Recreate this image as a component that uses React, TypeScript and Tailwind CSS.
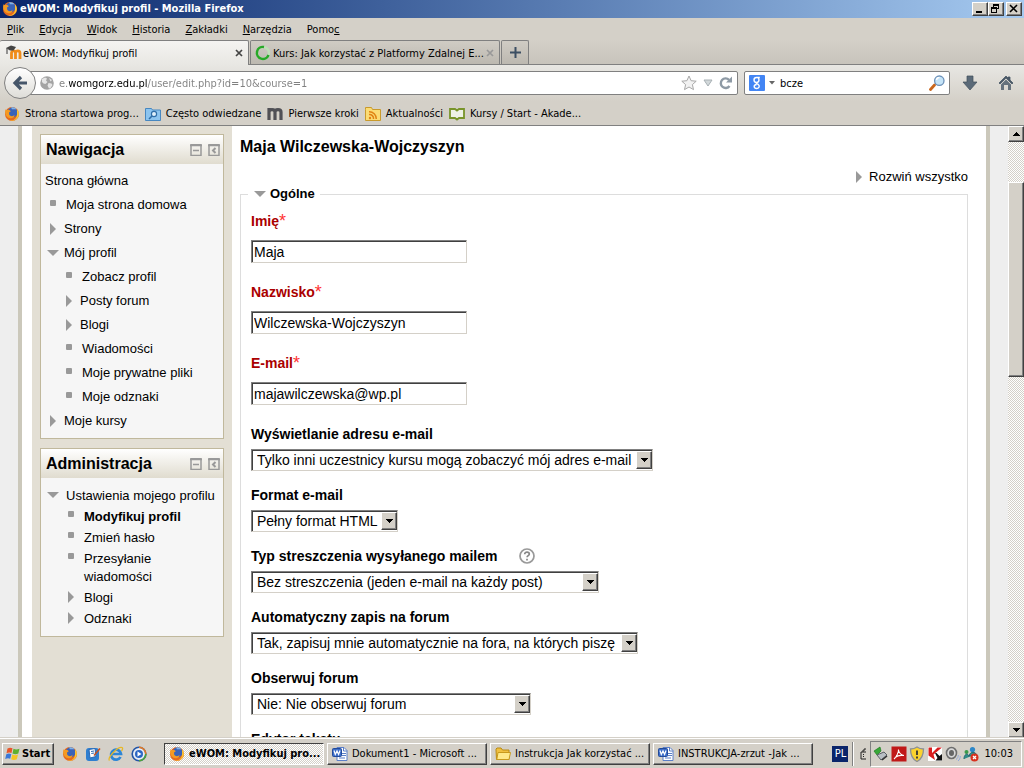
import { useState } from "react";
import type { ReactNode } from "react";

type Node = { label: string; level: 0 | 1 | 2; kind: "root" | "leaf" | "open" | "closed"; current?: boolean };

const navigation: Node[] = [
  { label: "Strona główna", level: 0, kind: "root" },
  { label: "Moja strona domowa", level: 1, kind: "leaf" },
  { label: "Strony", level: 1, kind: "closed" },
  { label: "Mój profil", level: 1, kind: "open" },
  { label: "Zobacz profil", level: 2, kind: "leaf" },
  { label: "Posty forum", level: 2, kind: "closed" },
  { label: "Blogi", level: 2, kind: "closed" },
  { label: "Wiadomości", level: 2, kind: "leaf" },
  { label: "Moje prywatne pliki", level: 2, kind: "leaf" },
  { label: "Moje odznaki", level: 2, kind: "leaf" },
  { label: "Moje kursy", level: 1, kind: "closed" },
];

const administration: Node[] = [
  { label: "Ustawienia mojego profilu", level: 1, kind: "open" },
  { label: "Modyfikuj profil", level: 2, kind: "leaf", current: true },
  { label: "Zmień hasło", level: 2, kind: "leaf" },
  { label: "Przesyłanie wiadomości", level: 2, kind: "leaf" },
  { label: "Blogi", level: 2, kind: "closed" },
  { label: "Odznaki", level: 2, kind: "closed" },
];

const textFields = [
  { id: "firstname", label: "Imię", value: "Maja" },
  { id: "lastname", label: "Nazwisko", value: "Wilczewska-Wojczyszyn" },
  { id: "email", label: "E-mail", value: "majawilczewska@wp.pl" },
];

const selectFields = [
  { id: "maildisplay", label: "Wyświetlanie adresu e-mail", value: "Tylko inni uczestnicy kursu mogą zobaczyć mój adres e-mail", width: "w-[402px]" },
  { id: "mailformat", label: "Format e-mail", value: "Pełny format HTML", width: "w-[147px]" },
  { id: "maildigest", label: "Typ streszczenia wysyłanego mailem", value: "Bez streszczenia (jeden e-mail na każdy post)", width: "w-[348px]", help: true },
  { id: "autosubscribe", label: "Automatyczny zapis na forum", value: "Tak, zapisuj mnie automatycznie na fora, na których piszę", width: "w-[387px]" },
  { id: "trackforums", label: "Obserwuj forum", value: "Nie: Nie obserwuj forum", width: "w-[280px]" },
  { id: "editor", label: "Edytor tekstu", value: "Domyślny edytor", width: "w-[280px]" },
];

const menus = [
  ["", "P", "lik"],
  ["", "E", "dycja"],
  ["", "W", "idok"],
  ["", "H", "istoria"],
  ["", "Z", "akładki"],
  ["", "N", "arzędzia"],
  ["Pomo", "c", ""],
];

const raised =
  "border border-t-white border-l-white border-r-[#404040] border-b-[#404040] bg-[#d4d0c8] shadow-[inset_-1px_-1px_0_#808080]";
const sunken = "border border-t-[#808080] border-l-[#808080] border-r-[#d4d0c8] border-b-[#d4d0c8] shadow-[inset_1px_1px_0_#404040]";
const dither = "bg-[conic-gradient(#fff_25%,#d4d0c8_0_50%,#fff_0_75%,#d4d0c8_0)] bg-[length:2px_2px]";

function FirefoxIcon({ className = "size-4" }) {
  return (
    <svg viewBox="0 0 16 16" className={`${className} shrink-0`}>
      <circle cx="8" cy="8" r="7" fill="#e66a1c" />
      <circle cx="8.5" cy="6.5" r="5" fill="#3a63b8" />
      <path d="M7 1.6c2-.8 4.500 0 5.600 1.800-1.800-.4-3 .2-4.600-.2z" fill="#7fb2e8" />
      <path d="M1.500 3.200c.5.600 1 .9 1.800.9 1.400-.4 2.900 0 3.500 1.200L5 6.400c.3 1.600-.2 2.300 1.300 3.300 1.500.9 3.200.4 4.300-.6-.2 2.200-1.900 3.300-4 3.200C3.300 12 1.500 9.500 1.200 7c-.2-1.500 0-2.800.3-3.800z" fill="#f49a22" />
      <path d="M13 3.300c1.900 2 2.500 5 1.200 7.500-1.600 3.200-5 4.700-8.200 3.900 4 .2 6.600-2.400 7-5.600.3-2-.1-3.900 0-5.800z" fill="#fdc733" />
    </svg>
  );
}

function MoodleIcon() {
  return (
    <svg viewBox="0 0 16 16" className="size-4 shrink-0">
      <path d="M5.500 14V8c0-2.800 4-2.800 4 0v6m0-6c0-2.800 4.500-2.800 4.500 0v6" fill="none" stroke="#f08c1a" strokeWidth="2.800" />
      <path d="M0 3l5-2.500 5 1.500-2.500 3.500H4z" fill="#444" />
      <path d="M1 3v6" stroke="#555" strokeWidth="1.200" />
    </svg>
  );
}

function WordIcon() {
  return (
    <svg viewBox="0 0 16 16" className="size-4 shrink-0">
      <path d="M5 1.500h7l3 3v10H5z" fill="#fff" stroke="#5b7fc7" />
      <path d="M11.500 1.500V5H15M10 7.500h4M10 9.500h4M7 12h6" fill="none" stroke="#5b7fc7" />
      <rect x="0.500" y="2.500" width="9" height="8" rx="1" fill="#3b6dc9" stroke="#234a99" />
      <path d="M2 4.500l1.300 4L5 5l1.600 3.500 1.400-4" fill="none" stroke="#fff" strokeWidth="1.200" />
    </svg>
  );
}

function FolderIcon() {
  return (
    <svg viewBox="0 0 16 16" className="size-4 shrink-0">
      <path d="M1 4V3l1-1h4l1.500 2H14v9.500H1.500z" fill="#f0c040" stroke="#b98a12" />
      <path d="M3 6.500h12.500L14 13.500H1.800z" fill="#ffe98a" stroke="#c99a1c" />
    </svg>
  );
}

function ArrowDown() {
  return (
    <svg viewBox="0 0 7 4" className="h-1 w-[7px]" shapeRendering="crispEdges">
      <path d="M0 0h7v1H6v1H5v1H4v1H3V3H2V2H1V1H0z" fill="#000" />
    </svg>
  );
}

function ArrowUp() {
  return (
    <svg viewBox="0 0 7 4" className="h-1 w-[7px]" shapeRendering="crispEdges">
      <path d="M3 0h1v1h1v1h1v1h1v1H0V3h1V2h1V1h1z" fill="#000" />
    </svg>
  );
}

function Twisty({ open }: { open: boolean }) {
  return (
    <svg viewBox="0 0 12 12" className="size-3 shrink-0">
      <path d={open ? "M0 3h12L6 9z" : "M3 0l6 6-6 6z"} fill="#999" />
    </svg>
  );
}

function TitleBar() {
  return (
    <header className="flex h-[18px] shrink-0 items-center bg-linear-to-r from-[#0a246a] to-[#a6caf0] px-[2px]">
      <FirefoxIcon />
      <h1 className="ml-[2px] grow text-[11px] font-bold text-white">eWOM: Modyfikuj profil - Mozilla Firefox</h1>
      <div className="flex">
        <button aria-label="Minimalizuj" className={`h-[14px] w-4 ${raised}`}>
          <svg viewBox="0 0 14 12" shapeRendering="crispEdges"><path d="M3 8h6v2H3z" /></svg>
        </button>
        <button aria-label="Przywróć" className={`h-[14px] w-4 ${raised}`}>
          <svg viewBox="0 0 14 12" shapeRendering="crispEdges">
            <path d="M4 1h6v5H8V5h1V3H5v1H4zM2 4h6v6H2zm1 2v3h4V6z" fillRule="evenodd" />
          </svg>
        </button>
        <button aria-label="Zamknij" className={`ml-[2px] h-[14px] w-4 ${raised}`}>
          <svg viewBox="0 0 14 12"><path d="M3 2l7 7M10 2L3 9" stroke="#000" strokeWidth="1.600" /></svg>
        </button>
      </div>
    </header>
  );
}

function TabStrip() {
  return (
    <div className="flex h-[25px] shrink-0 gap-px border-b border-[#808080] bg-linear-to-b from-[#d4d0c8] to-[#c8c4bc]" role="tablist">
      <div className="-mb-px flex w-[249px] items-center rounded-t-xs border-t border-r border-[#808080] bg-linear-to-b from-[#f4f3f1] to-[#e8e7e3] pr-[5px] pl-[6px]">
        <MoodleIcon />
        <button role="tab" aria-selected="true" className="ml-px grow pt-[2px] text-left">eWOM: Modyfikuj profil</button>
        <CloseTab label="Zamknij kartę eWOM" color="#444" />
      </div>
      <div className="flex w-[250px] items-center rounded-t-xs border border-b-0 border-[#808080] bg-linear-to-b from-[#d0ccc4] to-[#bcb8b0] pr-[5px] pl-1">
        <svg viewBox="0 0 16 16" className="size-4 shrink-0">
          <circle cx="8" cy="8" r="6" fill="none" stroke="#bfe0b8" strokeWidth="2.500" />
          <path d="M9 2a6 6 0 1 0 4.500 8" fill="none" stroke="#28a828" strokeWidth="2.500" />
        </svg>
        <button role="tab" aria-selected="false" className="ml-[2px] min-w-0 grow truncate pt-[2px] text-left">Kurs: Jak korzystać z Platformy Zdalnej E...</button>
        <CloseTab label="Zamknij kartę Kurs" color="#999" />
      </div>
      <button aria-label="Nowa karta" className="flex w-7 items-center justify-center rounded-t-xs border border-b-0 border-[#808080] bg-linear-to-b from-[#d0ccc4] to-[#bcb8b0]">
        <svg viewBox="0 0 11 11" className="size-[11px]"><path d="M5.500 0v11M0 5.500h11" stroke="#3c4f63" strokeWidth="2" /></svg>
      </button>
    </div>
  );
}

function CloseTab({ label, color }: { label: string; color: string }) {
  return (
    <button aria-label={label} className="shrink-0">
      <svg viewBox="0 0 8 8" className="size-2"><path d="M1 1l6 6M7 1L1 7" stroke={color} strokeWidth="1.700" /></svg>
    </button>
  );
}

function NavBar() {
  const [url, setUrl] = useState("e.womgorz.edu.pl/user/edit.php?id=10&course=1");
  const [query, setQuery] = useState("bcze");
  return (
    <div className="flex h-[36px] shrink-0 items-center bg-linear-to-b from-[#e8e7e3] to-[#d4d0c8] pl-1">
      <button aria-label="Wstecz" className="z-10 flex size-8 shrink-0 items-center justify-center rounded-full border border-[#808080] bg-linear-to-b from-white to-[#deddd8]">
        <svg viewBox="0 0 16 16" className="size-4"><path d="M9 2L3 8l6 6M3 8h12" fill="none" stroke="#46566a" strokeWidth="3.200" /></svg>
      </button>
      <div className="-ml-2 flex h-6 min-w-0 grow items-center rounded-xs border border-[#808080] bg-white pr-1 pl-[10px]">
        <svg viewBox="0 0 16 16" className="size-4 shrink-0">
          <circle cx="8" cy="8" r="6.800" fill="#a4a4a4" />
          <path d="M3 4l3-1.500 2 1-1 2 1.500 1.500-2 2-2-.5L3 7zM9.500 8l3 .5 1 1.500-2 3-1.500.5-1.500-3zM10 3l3 2-1.500 1.500z" fill="#e6e6e6" />
        </svg>
        <input
          aria-label="Adres strony"
          value={url}
          onChange={(e) => setUrl(e.target.value)}
          className="ml-1 min-w-0 grow bg-linear-[to_right,#808080_10px,#000_10px,#000_88px,#808080_88px] bg-clip-text pt-[2px] text-transparent caret-black outline-none"
        />
        <button aria-label="Dodaj zakładkę">
          <svg viewBox="0 0 16 16" className="size-4"><path d="M8 1l2.100 4.700 5.100.5-3.800 3.400 1.100 5L8 12l-4.500 2.600 1.100-5L.8 6.200l5.100-.5z" fill="#f2f2f2" stroke="#a8a8a8" /></svg>
        </button>
        <button aria-label="Historia adresów" className="ml-[6px]">
          <svg viewBox="0 0 10 8" className="h-2 w-[10px]"><path d="M1 1h8L5 7z" fill="#d2d8da" stroke="#a8b0b4" /></svg>
        </button>
        <button aria-label="Odśwież" className="ml-[6px]">
          <svg viewBox="0 0 14 14" className="size-[14px]">
            <path d="M10.500 10A4.800 4.800 0 1 1 10 3.800" fill="none" stroke="#8e9aa5" strokeWidth="2.400" />
            <path d="M13 .5v6H7z" fill="#8e9aa5" />
          </svg>
        </button>
      </div>
      <div className="ml-[6px] flex h-6 w-[206px] shrink-0 items-center rounded-xs border border-[#808080] bg-white px-1">
        <svg viewBox="0 0 16 16" className="size-4 shrink-0">
          <rect width="16" height="16" rx="1" fill="#4285f4" />
          <path d="M10.800 2.500H7.600C5.800 2.500 5 3.600 5 5s1 2.400 2.500 2.400S10 6.400 10 5 9.300 2.700 8.600 2.500M7.500 7.400c-1 1 .6 1.300 1.600 2 1.900 1.300 1.400 4.100-1.300 4.100-3.200 0-3.700-3.500-.2-4" fill="none" stroke="#fff" strokeWidth="1.400" />
        </svg>
        <button aria-label="Wybierz wyszukiwarkę" className="mr-[5px] ml-1">
          <svg viewBox="0 0 6 4" className="h-1 w-[6px]"><path d="M0 0h6L3 3.500z" fill="#666" /></svg>
        </button>
        <input aria-label="Szukaj" value={query} onChange={(e) => setQuery(e.target.value)} className="min-w-0 grow pt-[2px] text-black outline-none" />
        <button aria-label="Wyszukaj">
          <svg viewBox="0 0 16 16" className="size-4">
            <path d="M1.500 14.500l4-4.500" stroke="#c9661c" strokeWidth="2.800" strokeLinecap="round" />
            <circle cx="10.300" cy="5.700" r="4.700" fill="#c5e4f8" stroke="#6b90b8" strokeWidth="1.300" />
            <path d="M7.500 5a3 3 0 0 1 3-2.500" stroke="#fff" strokeWidth="1.500" fill="none" />
          </svg>
        </button>
      </div>
      <button aria-label="Pobrane pliki" className="mx-3">
        <svg viewBox="0 0 16 16" className="size-4"><path d="M5 1h6v6h4l-7 8-7-8h4z" fill="#5b6a78" stroke="#3f4d5a" strokeWidth="0.700" /></svg>
      </button>
      <button aria-label="Strona domowa" className="mr-[10px] ml-2">
        <svg viewBox="0 0 16 16" className="size-4">
          <path d="M8 1L1 8l1 1 6-6 6 6 1-1-3-3V2h-2v1z" fill="#4a5967" stroke="#4a5967" strokeWidth="0.800" />
          <path d="M3 9.500l5-5 5 5V15h-3v-5H6v5H3z" fill="#66727d" />
        </svg>
      </button>
    </div>
  );
}

function Bookmarks() {
  const items: { label: string; icon: ReactNode }[] = [
    { label: "Strona startowa prog...", icon: <FirefoxIcon /> },
    {
      label: "Często odwiedzane",
      icon: (
        <svg viewBox="0 0 16 16" className="size-4 shrink-0">
          <path d="M.5 2.500h6l1 1.500h8v10.500H.5z" fill="#8cc4ef" stroke="#4787c0" />
          <circle cx="9" cy="8" r="2.600" fill="#dff0fb" stroke="#2f6ea8" strokeWidth="1.200" />
          <path d="M7 10l-3 3" stroke="#2f6ea8" strokeWidth="1.600" />
        </svg>
      ),
    },
    {
      label: "Pierwsze kroki",
      icon: (
        <svg viewBox="0 0 16 16" className="size-4 shrink-0">
          <path d="M2 14V2m0 4c0-3.200 6-3.200 6 0v8m0-8c0-3.200 6-3.200 6 0v8" fill="none" stroke="#505055" strokeWidth="3.200" />
        </svg>
      ),
    },
    {
      label: "Aktualności",
      icon: (
        <svg viewBox="0 0 16 16" className="size-4 shrink-0">
          <path d="M.5 3.500v-2h6l1 2h8v11H.5z" fill="#fbdc74" stroke="#c99a2c" />
          <circle cx="5" cy="12" r="1.200" fill="#e08414" />
          <path d="M4 8.500a4 4 0 0 1 4.500 4.500M4 5.800a7 7 0 0 1 7.300 7.200" fill="none" stroke="#e08414" strokeWidth="1.500" />
        </svg>
      ),
    },
    {
      label: "Kursy / Start - Akade...",
      icon: (
        <svg viewBox="0 0 16 16" className="size-4 shrink-0">
          <path d="M1 3h5l2 1.500L10 3h5v9h-5l-2 1.500L6 12H1z" fill="#eef2e6" stroke="#78942a" strokeWidth="1.800" />
        </svg>
      ),
    },
  ];
  return (
    <nav aria-label="Zakładki" className="flex h-[25px] shrink-0 items-center gap-[6px] border-b border-[#808080] pt-px pl-1">
      {items.map((item) => (
        <a key={item.label} href="#" className="flex items-center gap-[5px] whitespace-nowrap">
          {item.icon}
          {item.label}
        </a>
      ))}
    </nav>
  );
}

function Block({ title, children }: { title: string; children: ReactNode }) {
  return (
    <section className="border border-[#c0b89c] bg-[#f6f6f6]">
      <div className="flex h-[29px] items-center bg-linear-to-b from-white to-[#e0dccf] pt-px pr-[3px] pl-[5px]">
        <h2 className="grow text-[16px] font-bold">{title}</h2>
        <button aria-label={`Ukryj blok ${title}`} className="mr-[6px]">
          <svg viewBox="0 0 12 12" className="size-3"><path d="M1 .5v11h10V.500zM0 1.500h12M3 6.500h6" fill="none" stroke="#999" strokeWidth="1.500" /></svg>
        </button>
        <button aria-label={`Zadokuj blok ${title}`}>
          <svg viewBox="0 0 12 12" className="size-3">
            <path d="M1 .5v11h10V.500zM0 1.500h12" fill="none" stroke="#999" strokeWidth="1.500" />
            <path d="M7.500 4L5 6.500 7.500 9" fill="none" stroke="#999" strokeWidth="2" />
          </svg>
        </button>
      </div>
      {children}
    </section>
  );
}

function TreeIcon({ kind }: { kind: Node["kind"] }) {
  if (kind === "leaf") return <span className="mb-1 flex w-3 shrink-0 justify-center"><i className="size-[6px] rounded-[1px] bg-[#999]" /></span>;
  return <Twisty open={kind === "open"} />;
}

function Navigation() {
  return (
    <ul className="pt-[5px] pb-[5px]">
      {navigation.map((n) => (
        <li key={n.label} className={`flex h-6 items-center ${n.level === 0 ? "pl-1" : n.level === 1 ? "pl-[6px]" : "pl-[22px]"} ${n.kind === "leaf" ? "gap-[7px]" : "gap-[5px]"}`}>
          {n.kind !== "root" && <TreeIcon kind={n.kind} />}
          <a href="#">{n.label}</a>
        </li>
      ))}
    </ul>
  );
}

function Administration() {
  return (
    <ul className="pt-[9px] pb-[5px] leading-[18px]">
      {administration.map((n) => (
        <li key={n.label} className={`flex gap-[7px] pb-[3px] ${n.level === 1 ? "pl-[6px]" : "pr-12 pl-6"}`}>
          <span className="flex h-4 items-center"><TreeIcon kind={n.kind} /></span>
          <a href="#" className={n.current ? "font-bold whitespace-nowrap" : n.level === 1 ? "whitespace-nowrap" : ""}>{n.label}</a>
        </li>
      ))}
    </ul>
  );
}

function ProfileForm() {
  return (
    <main className="flex min-w-0 grow flex-col bg-white pr-[18px] pl-2 text-[13px]">
      <h2 className="mt-[11px] text-[16px] leading-5 font-bold">Maja Wilczewska-Wojczyszyn</h2>
      <a href="#" className="mt-[11px] flex items-center gap-1 self-end leading-[18px]">
        <Twisty open={false} />
        Rozwiń wszystko
      </a>
      <form>
        <fieldset className="border border-[#ddd] px-[10px]">
          <legend className="ml-[-3px] flex items-center gap-1 pr-[5px] pl-[6px] text-[13px] leading-4 font-bold">
            <Twisty open />
            Ogólne
          </legend>
          <div className="pt-[9px] text-[14px]">
            {textFields.map((f) => (
              <div key={f.id} className="mb-[19px]">
                <label htmlFor={f.id} className="mb-[9px] flex h-5 items-center font-bold text-[#a00]">
                  {f.label}
                  <span className="text-[18px] leading-5 font-normal text-[#f33]">*</span>
                </label>
                <input id={f.id} defaultValue={f.value} className={`block h-[23px] w-[216px] bg-white px-[2px] outline-none ${sunken}`} />
              </div>
            ))}
            {selectFields.map((f) => (
              <div key={f.id} className="mb-[14px]">
                <div className="mb-[5px] flex h-5 items-center gap-[22px]">
                  <label htmlFor={f.id} className="font-bold">{f.label}</label>
                  {f.help && (
                    <button type="button" aria-label={`Pomoc: ${f.label}`}>
                      <svg viewBox="0 0 16 16" className="size-4">
                        <circle cx="8" cy="8" r="7" fill="#fff" stroke="#999" strokeWidth="1.700" />
                        <path d="M5.700 6.300c0-3 4.600-2.700 4.600-.2 0 1.600-2.200 1.500-2.200 3.200M8 10.800v1.800" fill="none" stroke="#888" strokeWidth="1.700" />
                      </svg>
                    </button>
                  )}
                </div>
                <div className={`relative ${f.width}`}>
                  <select id={f.id} className={`block h-[22px] w-full appearance-none bg-white pl-[5px] outline-none ${sunken}`}>
                    <option>{f.value}</option>
                  </select>
                  <span className={`pointer-events-none absolute top-[2px] right-px flex h-[18px] w-4 items-center justify-center ${raised}`}>
                    <ArrowDown />
                  </span>
                </div>
              </div>
            ))}
          </div>
        </fieldset>
      </form>
    </main>
  );
}

function ScrollBar() {
  return (
    <div className={`flex w-4 shrink-0 flex-col ${dither}`}>
      <button aria-label="Przewiń w górę" className={`flex h-4 shrink-0 items-center justify-center ${raised}`}><ArrowUp /></button>
      <div className="flex-[40]" />
      <div className={`flex-[194] ${raised}`} />
      <div className="flex-[346]" />
      <button aria-label="Przewiń w dół" className={`flex h-4 shrink-0 items-center justify-center ${raised}`}><ArrowDown /></button>
    </div>
  );
}

const tasks = [
  { label: "eWOM: Modyfikuj pro...", icon: <FirefoxIcon />, active: true },
  { label: "Dokument1 - Microsoft ...", icon: <WordIcon /> },
  { label: "Instrukcja Jak korzystać ...", icon: <FolderIcon /> },
  { label: "INSTRUKCJA-zrzut -Jak ...", icon: <WordIcon /> },
];

function QuickLaunch() {
  return (
    <div className="ml-2 flex w-[102px] shrink-0 gap-[7px]">
      <button aria-label="Firefox"><FirefoxIcon /></button>
      <button aria-label="Pokaż pulpit">
        <svg viewBox="0 0 16 16" className="size-4">
          <rect x="1" y="2" width="13" height="13" rx="3" fill="#2f7fd0" />
          <path d="M4 3.500l6-1 1 8-6 1.500z" fill="#fff" stroke="#2a68b4" />
          <path d="M6 5.500l3-.5M6.300 7.500l3-.5" stroke="#2a68b4" />
          <path d="M15 2.500L9 9.500" stroke="#c8501e" strokeWidth="1.500" />
        </svg>
      </button>
      <button aria-label="Internet Explorer">
        <svg viewBox="0 0 16 16" className="size-4">
          <path d="M12.500 11a5 5 0 1 1 .5-3H4" fill="none" stroke="#2d86d6" strokeWidth="2.700" />
          <path d="M1.500 14.500C-1 12 10 0 14 1.500c1.200.6.300 2.500-.5 3.500" fill="none" stroke="#e8b824" strokeWidth="1.300" />
        </svg>
      </button>
      <button aria-label="Windows Media Player">
        <svg viewBox="0 0 16 16" className="size-4">
          <circle cx="8" cy="8" r="6.800" fill="#e9eef6" stroke="#2556a6" strokeWidth="1.600" />
          <path d="M8 1.200A6.800 6.800 0 0 1 14.800 8" fill="none" stroke="#e57a22" strokeWidth="1.600" />
          <path d="M14.800 8A6.800 6.800 0 0 1 8 14.800" fill="none" stroke="#4da23a" strokeWidth="1.600" />
          <circle cx="8" cy="8" r="4" fill="#2b66c4" />
          <path d="M6.500 5.500v5l4-2.500z" fill="#fff" />
        </svg>
      </button>
    </div>
  );
}

function Tray() {
  return (
    <div className="mr-[2px] ml-1 flex h-[26px] shrink-0 items-center gap-[2px] border border-t-[#808080] border-r-white border-b-white border-l-[#808080] pr-2 pl-[2px]">
      <svg viewBox="0 0 16 16" className="size-4">
        <path d="M1 5l6-4 1 4-4 4z" fill="#38a838" stroke="#1e7a1e" strokeWidth="0.700" />
        <path d="M4 9l7-3 3 3-6 5z" fill="#b9bec4" stroke="#5a5f66" />
        <path d="M9 14l5-4" stroke="#333" strokeWidth="1.600" />
      </svg>
      <svg viewBox="0 0 16 16" className="size-4">
        <rect width="15" height="15" x="0.500" y="0.500" fill="#c01818" />
        <path d="M3 13c2-1.500 5-7 4.500-9.500M7.500 4c.5 3 3 5.500 5.500 5.500M4 11.500c2.500-2 5-2.300 8-2" fill="none" stroke="#fff" strokeWidth="1.100" />
      </svg>
      <svg viewBox="0 0 16 16" className="size-4">
        <path d="M8 1c2 1.500 4 2 6.500 2 0 6-1.500 10-6.500 12.500C3 13 1.500 9 1.500 3 4 3 6 2.500 8 1z" fill="#fbd32e" stroke="#8c8f94" strokeWidth="1.300" />
        <path d="M8 4.500v4.500M8 10.500v2" stroke="#333" strokeWidth="1.800" />
      </svg>
      <svg viewBox="0 0 16 16" className="size-4">
        <rect width="14" height="14" x="1" y="1" fill="#fff" />
        <path d="M1.500 1.500h3.500v5.500l5.500-5.500H15L6.500 8.500 8 14 1.500 9.500z" fill="#d81e1e" />
        <path d="M8 7l1.500 0 3 3L15 8v6.500H8.500l2-2.500z" fill="#111" />
      </svg>
      <svg viewBox="0 0 16 16" className="size-4">
        <ellipse cx="6.500" cy="7" rx="5" ry="5.500" fill="#d8d8d8" stroke="#6e6e6e" strokeWidth="1.600" />
        <ellipse cx="6.500" cy="7" rx="2.500" ry="3" fill="#666" />
        <path d="M11 13.500c1.500-1 2.300-2.500 2.300-4.500M13 15c1.500-1.200 2.300-3 2.300-5" fill="none" stroke="#8fa8dc" />
      </svg>
      <svg viewBox="0 0 16 16" className="size-4">
        <circle cx="9.500" cy="3.500" r="2.600" fill="#2d87c8" />
        <circle cx="3.500" cy="6" r="2" fill="#3a9a4a" />
        <path d="M1 13c0-6 5-6 5-2M6 10c1-5 7-5 8 0z" fill="#2f8f88" stroke="#1f6670" />
        <circle cx="11.500" cy="11.500" r="4" fill="#d8301e" />
        <path d="M10 10l3 3M13 10l-3 3" stroke="#fff" strokeWidth="1.300" />
      </svg>
      <time className="ml-[3px]">10:03</time>
    </div>
  );
}

function TaskBar() {
  return (
    <footer className="flex h-[30px] shrink-0 items-center border-t border-white bg-[#d4d0c8] pl-[2px] shadow-[0_-1px_0_#d4d0c8]">
      <button className={`flex h-[22px] w-[52px] shrink-0 items-center gap-px pl-[2px] font-bold ${raised}`}>
        <svg viewBox="0 0 16 16" className="size-4 shrink-0">
          <path d="M2.500 2.500C4.500 1.300 6 1.500 7.500 2.300L6.500 7C5 6.200 3.500 6.200 1.500 7.200z" fill="#e8562a" />
          <path d="M8.500 2.800c2 1 3.500 1 6 0l-1.200 4.800c-2 1-3.800 1-5.800 0z" fill="#5fb030" />
          <path d="M1.300 8.200c2-1 3.500-1 5 0L5.200 12.800c-1.500-.8-3-.8-5 .2z" fill="#3a78d8" />
          <path d="M7.300 8.600c2 1 3.800 1 5.700 0l-1.200 4.700c-2 1-3.700 1-5.600 0z" fill="#f6c522" />
        </svg>
        Start
      </button>
      <QuickLaunch />
      <div className="flex min-w-0 grow gap-[3px]">
        {tasks.map((t) => (
          <button
            key={t.label}
            className={`flex h-[22px] w-40 min-w-0 items-center gap-1 pl-1 text-left ${t.active ? `font-bold border border-t-[#404040] border-l-[#404040] border-r-white border-b-white ${dither}` : raised}`}
          >
            {t.icon}
            <span className="truncate">{t.label}</span>
          </button>
        ))}
      </div>
      <span className="mr-1 ml-[6px] flex size-4 shrink-0 items-center justify-center bg-[#0a246a] text-white">PL</span>
      <div className="h-6 border-r border-l border-r-white border-l-[#808080]" />
      <svg viewBox="0 0 6 12" className="ml-[6px] h-3 w-[6px] shrink-0"><path d="M5 0v2H3v2M6 4H1v7h5M3 6.500h1M3 8.500h1" fill="none" stroke="#222" /></svg>
      <Tray />
    </footer>
  );
}

export default function App() {
  return (
    <div className="flex h-screen flex-col overflow-hidden bg-[#d4d0c8] font-['DejaVu_Sans_Condensed','DejaVu_Sans',sans-serif] text-[11px] leading-4 text-black">
      <TitleBar />
      <nav aria-label="Menu" className="flex h-[22px] shrink-0 items-center gap-[15px] pt-[2px] pl-[7px]">
        {menus.map(([before, key, after]) => (
          <button key={key}>{before}<u>{key}</u>{after}</button>
        ))}
      </nav>
      <TabStrip />
      <NavBar />
      <Bookmarks />
      <div className="flex min-h-0 grow overflow-hidden font-['Liberation_Sans',Arial,sans-serif]">
        <div className="flex min-w-0 grow overflow-hidden bg-[#eee] px-[18px]">
          <div className="flex min-w-0 grow border-x-4 border-[#cbc8bb] bg-white pl-[10px]">
            <aside className="flex w-[200px] shrink-0 flex-col gap-[9px] bg-[#e3dfd4] p-2 text-[13px]">
              <Block title="Nawigacja"><Navigation /></Block>
              <Block title="Administracja"><Administration /></Block>
            </aside>
            <ProfileForm />
          </div>
        </div>
        <ScrollBar />
      </div>
      <TaskBar />
    </div>
  );
}
